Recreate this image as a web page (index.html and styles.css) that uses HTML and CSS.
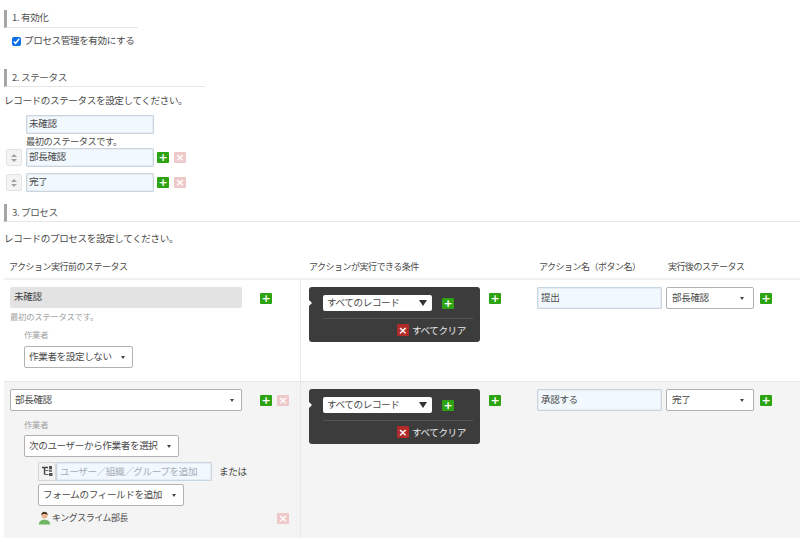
FILE: index.html
```html
<!DOCTYPE html>
<html lang="ja">
<head>
<meta charset="utf-8">
<title>プロセス管理</title>
<link rel="stylesheet" href="styles.css">
</head>
<body>
<section class="sec sec-1">
  <h2 class="sec-title w-134">1. 有効化</h2>
  <label class="enable"><input type="checkbox" checked class="chk">プロセス管理を有効にする</label>
</section>
<section class="sec sec-2">
  <h2 class="sec-title w-201">2. ステータス</h2>
  <p class="desc">レコードのステータスを設定してください。</p>
  <div class="status-list">
    <div class="status-row first"><span class="mover-space"></span><span class="tinput status-in">未確認</span></div>
    <p class="status-note">最初のステータスです。</p>
    <div class="status-row"><span class="mover"><i class="up"></i><i class="down"></i></span><span class="tinput status-in">部長確認</span><span class="btn plus">+</span><span class="btn del">×</span></div>
    <div class="status-row"><span class="mover"><i class="up"></i><i class="down"></i></span><span class="tinput status-in">完了</span><span class="btn plus">+</span><span class="btn del">×</span></div>
  </div>
</section>
<section class="sec sec-3">
  <h2 class="sec-title">3. プロセス</h2>
  <p class="desc">レコードのプロセスを設定してください。</p>
  <div class="grid head">
    <div class="hc c1">アクション実行前のステータス</div>
    <div class="hc c2">アクションが実行できる条件</div>
    <div class="hc c3">アクション名（ボタン名）</div>
    <div class="hc c4">実行後のステータス</div>
  </div>
  <div class="grid row row-1">
    <div class="cell c1">
      <div class="from-line">
        <div class="from-wrap">
          <div class="static">未確認</div>
          <div class="muted">最初のステータスです。</div>
        </div>
        <span class="btn plus">+</span>
      </div>
      <div class="assign assign-1">
        <div class="muted label">作業者</div>
        <span class="sel sel-none">作業者を設定しない<i class="caret"></i></span>
      </div>
    </div>
    <div class="cell c2">
      <div class="cond-line">
        <div class="cond">
          <div class="cond-top"><span class="cond-sel">すべてのレコード<i class="caret-big"></i></span><span class="btn plus">+</span></div>
          <div class="cond-bottom"><span class="btn clear">×</span>すべてクリア</div>
        </div>
        <span class="btn plus">+</span>
      </div>
    </div>
    <div class="cell c3"><span class="tinput name-in">提出</span></div>
    <div class="cell c4"><span class="sel sel-to">部長確認<i class="caret"></i></span><span class="btn plus">+</span></div>
  </div>
  <div class="grid row row-2">
    <div class="cell c1">
      <div class="from-line">
        <span class="sel sel-from">部長確認<i class="caret"></i></span>
        <span class="btn plus">+</span><span class="btn del">×</span>
      </div>
      <div class="assign assign-2">
        <div class="muted label">作業者</div>
        <span class="sel sel-next">次のユーザーから作業者を選択<i class="caret"></i></span>
        <div class="pick">
          <div class="pick-line">
            <span class="tree"><svg width="13" height="13" viewBox="0 0 13 13"><path d="M1 2.500h6M3.500 2.500v7" stroke="#444" stroke-width="1.400" fill="none"/><path d="M3.500 5.500h4M3.500 9.500h4" stroke="#666" fill="none"/><rect x="8" y="1" width="3" height="3" fill="#555"/><rect x="8" y="4.500" width="3" height="2.500" fill="#777"/><rect x="8" y="8" width="3.500" height="3" fill="#555"/></svg></span>
            <span class="tinput user-in">ユーザー／組織／グループを追加</span>
            <span class="or">または</span>
          </div>
          <span class="sel sel-form">フォームのフィールドを追加<i class="caret"></i></span>
          <div class="user-line">
            <span class="user"><svg class="avatar" width="13" height="14" viewBox="0 0 13 14"><circle cx="6.500" cy="4.500" r="3" fill="#e8b58e"/><path d="M3.300 4.200C3.200 1.500 5 .8 6.500.8s3.300.7 3.200 3.400C8.800 2.800 4.500 2.600 3.300 4.200z" fill="#4a3526"/><path d="M.8 13.500c0-3 2.400-4.800 5.700-4.800s5.700 1.800 5.700 4.800z" fill="#6fb562"/></svg>キングスライム部長</span>
            <span class="btn del">×</span>
          </div>
        </div>
      </div>
    </div>
    <div class="cell c2">
      <div class="cond-line">
        <div class="cond">
          <div class="cond-top"><span class="cond-sel">すべてのレコード<i class="caret-big"></i></span><span class="btn plus">+</span></div>
          <div class="cond-bottom"><span class="btn clear">×</span>すべてクリア</div>
        </div>
        <span class="btn plus">+</span>
      </div>
    </div>
    <div class="cell c3"><span class="tinput name-in">承認する</span></div>
    <div class="cell c4"><span class="sel sel-to">完了<i class="caret"></i></span><span class="btn plus">+</span></div>
  </div>
</section>
</body>
</html>
```

FILE: styles.css
```css
* { box-sizing: border-box; }
html, body { height: 100%; }
body {
  margin: 0;
  height: 538px;
  overflow: hidden;
  background: #fff;
  color: #4a4a4a;
  font-family: "Noto Sans CJK JP", "Noto Sans", sans-serif;
  font-size: 9.600px;
  letter-spacing: -0.400px;
  line-height: 14px;
  white-space: nowrap;
}
h2, p { margin: 0; font-weight: 400; font-size: inherit; }
.sec { margin-left: 4px; }
.sec-1 { padding-top: 10px; height: 69px; }
.sec-2 { height: 135px; }
.sec-title {
  height: 18px;
  border-left: 3px solid #a5a5a5;
  border-bottom: 1px solid #e6e6e6;
  padding-left: 5px;
  line-height: 16px;
  color: #555;
}
.sec-1 .sec-title { line-height: 15px; }
.w-134 { width: 134px; }
.w-201 { width: 201px; }
.enable { display: flex; align-items: center; margin: 5px 0 0 8px; height: 14px; }
.chk { margin: 2px 3px 0 0; width: 9px; height: 9px; accent-color: #0a6ee8; }
.desc { margin-top: 6px; height: 14px; }
.status-list { margin-top: 8px; }
.status-row { display: flex; align-items: center; height: 19px; }
.mover-space { width: 22px; }
.mover {
  width: 16px; height: 17px; margin: 0 4px 0 2px;
  border: 1px solid #e3e3e3; border-radius: 2px; background: #f4f4f4;
  display: flex; flex-direction: column; align-items: center; justify-content: center; gap: 2px;
}
.up { border: 3px solid transparent; border-top: 0; border-bottom: 3px solid #a3a3a3; }
.down { border: 3px solid transparent; border-bottom: 0; border-top: 3px solid #a3a3a3; }
.tinput {
  display: inline-block;
  background: #f1f8fe;
  border: 1px solid #c9d6e0;
  box-shadow: 0 0 0 1px #e6ecf1 inset;
  border-radius: 1px;
  padding-left: 3px;
  color: #4a4a4a;
}
.status-in { width: 128px; height: 19px; line-height: 15px; padding-left: 2px; }
.status-note { height: 14px; margin: 0 0 0 22px; font-size: 9.200px; }
.status-row + .status-row { margin-top: 6px; }
.status-note + .status-row { margin-top: 0; }
.status-row .plus { margin-left: 3px; }
.status-row .del { margin-left: 5px; }
.btn {
  flex: none;
  display: inline-flex; align-items: center; justify-content: center;
  width: 12px; height: 11px;
  border-radius: 1px;
  font-family: "DejaVu Sans", sans-serif;
  font-size: 11px; font-weight: 700; line-height: 1;
  letter-spacing: 0;
  color: #fff;
}
.plus { background: #2da311; }
.del { background: #eec9c9; }
.clear { background: #b02a2a; height: 12px; margin-right: 3px; }
.sec-3 { margin-left: 0; }
.sec-3 .sec-title { margin-left: 4px; }
.sec-3 .desc { margin: 9px 0 0 4px; }
.grid { display: grid; grid-template-columns: 296px 233px 129px 138px; margin-left: 4px; }
.head { margin-top: 15px; height: 20px; border-bottom: 2px solid #f1f1f1; }
.hc { padding: 0 0 0 5px; font-size: 9px; letter-spacing: -0.500px; }
.hc.c2 { padding-left: 9px; }
.hc.c3, .hc.c4 { padding-left: 6px; }
.row-1 { height: 102px; border-bottom: 1px solid #e6e6e6; }
.row-2 { height: 157px; background: #f4f4f4; }
.cell { display: flex; }
.c1, .c2 { flex-direction: column; }
.cell.c1 { padding: 7px 0 0 6px; }
.cell.c2 { padding: 7px 0 0 8px; border-left: 1px solid #e9e9e9; }
.cell.c3 { padding: 7px 0 0 4px; align-items: flex-start; }
.cell.c4 { padding: 7px 0 0 4px; gap: 6px; align-items: flex-start; }
.cell.c4 .plus { margin-top: 6px; }
.from-line { display: flex; align-items: flex-start; }
.from-line > .plus { margin: 6px 0 0 18px; }
.from-line > .del { margin: 6px 0 0 5px; }
.from-wrap { width: 232px; }
.static {
  height: 21px; line-height: 19px; padding-left: 4px;
  background: #e3e3e3; border-radius: 2px; color: #3e3e3e;
}
.muted { color: #a2a2a2; font-size: 8.400px; letter-spacing: -0.300px; line-height: 14px; margin-top: 1px; }
.assign { padding-left: 14px; }
.assign-1 { margin-top: 4px; }
.assign-2 { margin-top: 6px; }
.label { height: 14px; margin: 0; }
.assign-1 .label { margin-bottom: 5px; }
.assign-2 .label { margin-bottom: 4px; }
.sel {
  display: flex; align-items: center; justify-content: space-between;
  height: 22px;
  padding: 0 7px 2px 4px;
  background: #fff;
  border: 1px solid #b2b2b2;
  border-radius: 2px;
  color: #4a4a4a;
}
.caret { flex: none; border: 2.500px solid transparent; border-bottom: 0; border-top: 3px solid #444; margin: 2px 0 0 6px; }
.sel-none { width: 109px; }
.sel-from { width: 232px; }
.sel-next { width: 155px; }
.sel-form { width: 146px; }
.sel-to { width: 88px; padding-left: 5px; padding-right: 9px; }
.pick { padding: 5px 0 0 14px; }
.pick-line { display: flex; align-items: center; height: 18px; margin-bottom: 4px; }
.tree {
  width: 18px; height: 19px;
  display: flex; align-items: center; justify-content: center;
  background: #f2f2f2; border: 1px solid #d6d6d6; border-radius: 1px;
}
.user-in { width: 156px; height: 19px; line-height: 16px; color: #a5aeb6; }
.or { margin-left: 7px; }
.user-line { display: flex; align-items: center; justify-content: space-between; height: 14px; margin-top: 5px; width: 251px; }
.user { display: flex; align-items: center; font-size: 9px; letter-spacing: -0.500px; }
.avatar { margin-right: 1px; }
.cond-line { display: flex; align-items: flex-start; }
.cond-line > .plus { margin: 6px 0 0 9px; }
.cond {
  position: relative;
  width: 171px; height: 55px;
  background: #3c3c3c; border-radius: 3px;
  padding: 7px 7px 0 14px;
}
.cond::before {
  content: ""; position: absolute; left: 0; top: 13px;
  border: 3px solid transparent; border-left: 3px solid #fff; border-right: 0;
}
.cond-top {
  display: flex; align-items: center; gap: 10px;
  height: 17px;
}
.cond-top .plus { margin-top: 1px; }
.cond-sel {
  display: flex; align-items: center; justify-content: space-between;
  width: 109px; height: 16px;
  padding: 0 5px 2px 4px;
  background: #fff; border-radius: 2px;
  color: #4a4a4a;
}
.caret-big { border: 4px solid transparent; border-bottom: 0; border-top: 6px solid #333; margin-top: 2px; }
.cond-bottom {
  margin-top: 7px; padding: 4px 7px 0 0;
  border-top: 1px solid #555;
  display: flex; align-items: center; justify-content: flex-end;
  color: #e8e8e8;
}
.name-in { width: 126px; height: 22px; line-height: 18px; }
```
